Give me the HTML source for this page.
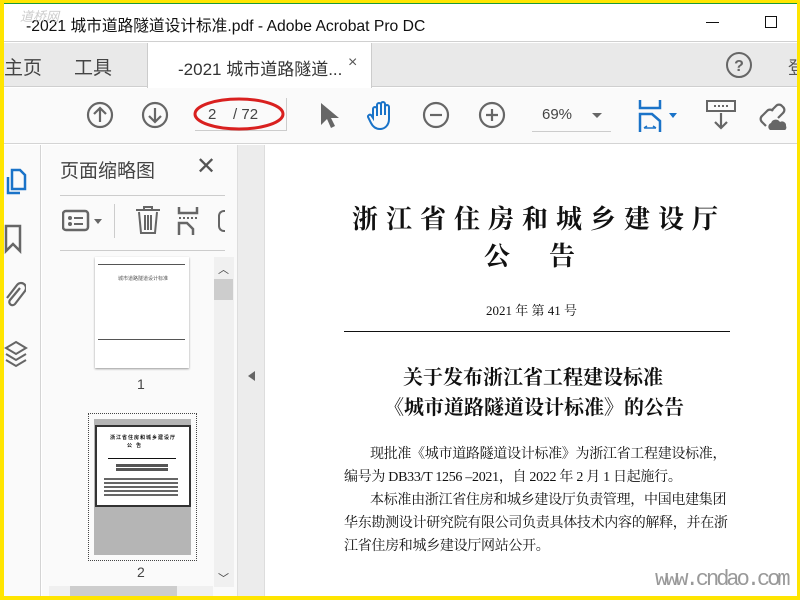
<!DOCTYPE html>
<html><head><meta charset="utf-8"><style>
*{margin:0;padding:0;box-sizing:border-box}
body{width:800px;height:600px;overflow:hidden;background:#fff;position:relative;font-family:"Liberation Sans","Noto Sans CJK SC",sans-serif;color:#333}
.a{position:absolute}
.serif{font-family:"Liberation Serif","Noto Serif CJK SC",serif;color:#111;white-space:nowrap}
.b{font-size:14px;line-height:23px;letter-spacing:-0.3px}
svg{position:absolute}
</style></head><body>
<div class="a" style="left:0;top:3px;width:800px;height:1px;background:#1a9a3a"></div>
<div class="a" style="left:4px;top:4px;width:793px;height:38px;background:#fff;border-bottom:1px solid #d0d0d0"></div>
<div class="a" style="left:26px;top:13px;font-size:15.7px;color:#111;white-space:nowrap">-2021 城市道路隧道设计标准.pdf - Adobe Acrobat Pro DC</div>
<div class="a" style="left:20px;top:6px;font-size:13px;color:#ccc;font-style:italic">道桥网</div>
<div class="a" style="left:706px;top:22px;width:13px;height:1px;background:#111"></div>
<div class="a" style="left:765px;top:16px;width:12px;height:12px;border:1px solid #111"></div>
<div class="a" style="left:4px;top:43px;width:793px;height:44px;background:#e9e9e9;border-bottom:1px solid #cfcfcf"></div>
<div class="a" style="left:147px;top:43px;width:225px;height:45px;background:#fff;border-left:1px solid #ccc;border-right:1px solid #ccc"></div>
<div class="a" style="left:4px;top:53px;font-size:19px;color:#444">主页</div>
<div class="a" style="left:74px;top:53px;font-size:19px;color:#444">工具</div>
<div class="a" style="left:178px;top:55px;font-size:17px;color:#333;white-space:nowrap">-2021 城市道路隧道...</div>
<div class="a" style="left:348px;top:54px;font-size:16px;color:#555">×</div>
<svg style="left:725px;top:51px" width="28" height="28"><circle cx="14" cy="14" r="12" fill="none" stroke="#666" stroke-width="2"/><text x="14" y="20" font-size="16" text-anchor="middle" fill="#666" font-family="Liberation Sans" font-weight="bold">?</text></svg>
<div class="a" style="left:788px;top:54px;font-size:18px;color:#555">登</div>
<div class="a" style="left:4px;top:88px;width:793px;height:56px;background:#fafafa;border-bottom:1px solid #d4d4d4"></div>
<svg style="left:86px;top:101px" width="28" height="28"><circle cx="14" cy="14" r="12" fill="none" stroke="#666" stroke-width="2.2"/><path d="M14 21V7M8 13l6-6 6 6" fill="none" stroke="#666" stroke-width="2.2"/></svg>
<svg style="left:141px;top:101px" width="28" height="28"><circle cx="14" cy="14" r="12" fill="none" stroke="#666" stroke-width="2.2"/><path d="M14 7v14M8 15l6 6 6-6" fill="none" stroke="#666" stroke-width="2.2"/></svg>
<div class="a" style="left:195px;top:130px;width:92px;height:1px;background:#ccc"></div>
<div class="a" style="left:208px;top:106px;font-size:15px;color:#444;white-space:nowrap">2&nbsp;&nbsp;&nbsp;&nbsp;/ 72</div>
<svg style="left:190px;top:94px" width="100" height="40"><ellipse cx="49" cy="20" rx="44" ry="15" fill="none" stroke="#d9201f" stroke-width="3"/></svg>
<div class="a" style="left:286px;top:98px;width:1px;height:32px;background:#ccc"></div>
<svg style="left:318px;top:101px" width="22" height="28"><path d="M3 2v22l6-6 4 9 4-2-4-8h8z" fill="#666"/></svg>
<svg style="left:366px;top:100px" width="30" height="32"><path d="M7 18V9a2 2 0 0 1 4 0v7V5a2 2 0 0 1 4 0v10V4a2 2 0 0 1 4 0v11V7a2 2 0 0 1 4 0v12c0 6-4 10-9 10-4 0-7-2-9-6l-3-6a2 2 0 0 1 3-2z" fill="none" stroke="#1a73c8" stroke-width="2"/></svg>
<svg style="left:422px;top:101px" width="28" height="28"><circle cx="14" cy="14" r="12" fill="none" stroke="#666" stroke-width="2.2"/><path d="M8 14h12" stroke="#666" stroke-width="2.2"/></svg>
<svg style="left:478px;top:101px" width="28" height="28"><circle cx="14" cy="14" r="12" fill="none" stroke="#666" stroke-width="2.2"/><path d="M8 14h12M14 8v12" stroke="#666" stroke-width="2.2"/></svg>
<div class="a" style="left:542px;top:106px;font-size:15px;color:#444">69%</div>
<div class="a" style="left:592px;top:113px;border:5px solid transparent;border-top:5px solid #666;border-bottom:0"></div>
<div class="a" style="left:532px;top:131px;width:79px;height:1px;background:#ccc"></div>
<svg style="left:638px;top:100px" width="42" height="32"><path d="M2 0v8h20V0" fill="none" stroke="#1a73c8" stroke-width="2.5"/><path d="M2 32V14h12l8 7v11" fill="none" stroke="#1a73c8" stroke-width="2.5"/><path d="M6 28h12M6 28l3-2M18 28l-3-2" stroke="#1a73c8" stroke-width="1.5"/><path d="M31 13h8l-4 5z" fill="#1a73c8"/></svg>
<svg style="left:706px;top:100px" width="30" height="32"><rect x="1" y="1" width="28" height="10" fill="none" stroke="#666" stroke-width="2"/><path d="M8 6h14" stroke="#666" stroke-width="2" stroke-dasharray="2 2"/><path d="M15 13v15M9 22l6 6 6-6" fill="none" stroke="#666" stroke-width="2.2"/></svg>
<svg style="left:756px;top:100px" width="32" height="32"><path d="M10 26l-4-4a4 4 0 0 1 0-6l5-5a4 4 0 0 1 6 0M16 10l4-4a4 4 0 0 1 6 0l1 1a4 4 0 0 1 0 6l-5 5" fill="none" stroke="#666" stroke-width="2.2"/><path d="M14 30a4 4 0 0 1 1-7 5 5 0 0 1 9-1 4 4 0 0 1 6 4 3 3 0 0 1-1 4z" fill="#666"/></svg>
<div class="a" style="left:4px;top:145px;width:37px;height:451px;background:#fafafa;border-right:1px solid #d4d4d4"></div>
<svg style="left:5px;top:168px" width="22" height="28"><path d="M7 2h8l5 5v14H7z" fill="none" stroke="#1a73c8" stroke-width="2.5"/><path d="M3 9v16h12" fill="none" stroke="#1a73c8" stroke-width="2.5"/></svg>
<svg style="left:4px;top:224px" width="20" height="30"><path d="M2 2h14v25l-7-7-7 7z" fill="none" stroke="#666" stroke-width="2.5"/></svg>
<svg style="left:4px;top:280px" width="22" height="30"><path d="M16 8L6 20a3 3 0 0 0 5 4l10-13a5 5 0 0 0-8-6L3 18" fill="none" stroke="#666" stroke-width="2.2"/></svg>
<svg style="left:4px;top:340px" width="24" height="32"><path d="M12 2l10 6-10 6-10-6zM2 14l10 6 10-6M2 20l10 6 10-6" fill="none" stroke="#666" stroke-width="2"/></svg>
<div class="a" style="left:42px;top:145px;width:195px;height:451px;background:#fafafa"></div>
<div class="a" style="left:60px;top:156px;font-size:19px;color:#444">页面缩略图</div>
<div class="a" style="left:196px;top:152px;font-size:24px;color:#555">✕</div>
<div class="a" style="left:60px;top:195px;width:165px;height:1px;background:#ccc"></div>
<div class="a" style="left:60px;top:250px;width:165px;height:1px;background:#ccc"></div>
<svg style="left:62px;top:208px" width="44" height="26"><rect x="1" y="3" width="25" height="19" rx="3" fill="none" stroke="#666" stroke-width="2.5"/><circle cx="8" cy="10" r="2" fill="#666"/><circle cx="8" cy="16" r="2" fill="#666"/><path d="M12 10h9M12 16h9" stroke="#666" stroke-width="2"/><path d="M32 11h8l-4 5z" fill="#666"/></svg>
<div class="a" style="left:114px;top:204px;width:1px;height:34px;background:#ccc"></div>
<svg style="left:135px;top:205px" width="26" height="30"><path d="M1 5h24M9 5V2h8v3M4 7l2 21h14l2-21M10 10v15M13 10v15M16 10v15" fill="none" stroke="#666" stroke-width="2"/></svg>
<svg style="left:177px;top:207px" width="24" height="28"><path d="M2 0v6h18V0M2 28V16h8l6 6v6" fill="none" stroke="#666" stroke-width="2.5"/><path d="M2 11h20" stroke="#666" stroke-width="2" stroke-dasharray="2 2"/></svg>
<div class="a" style="left:218px;top:210px;width:7px;height:22px;border:2.5px solid #666;border-right:0;border-radius:6px 0 0 6px"></div>
<div class="a" style="left:95px;top:257px;width:94px;height:111px;background:#fff;box-shadow:0 1px 2px #999"></div>
<div class="a" style="left:98px;top:264px;width:87px;height:1px;background:#555"></div>
<div class="a" style="left:118px;top:275px;font-size:5px;color:#555">城市道路隧道设计标准</div>
<div class="a" style="left:98px;top:339px;width:87px;height:1px;background:#555"></div>
<div class="a" style="left:137px;top:376px;font-size:14px;color:#444">1</div>
<div class="a" style="left:88px;top:413px;width:109px;height:148px;border:1px dotted #444"></div>
<div class="a" style="left:94px;top:419px;width:97px;height:136px;background:#b5b5b5"></div>
<div class="a" style="left:95px;top:425px;width:96px;height:82px;background:#fff;border:2px solid #333"></div>
<div class="a" style="left:110px;top:434px;font-size:5px;font-weight:bold;color:#111;letter-spacing:1px;white-space:nowrap">浙江省住房和城乡建设厅</div>
<div class="a" style="left:127px;top:442px;font-size:5px;font-weight:bold;color:#111;white-space:nowrap">公&nbsp;&nbsp;&nbsp;告</div>
<div class="a" style="left:108px;top:458px;width:68px;height:1px;background:#111"></div>
<div class="a" style="left:116px;top:463px;width:52px;height:9px;background:repeating-linear-gradient(#fff 0 1px,#555 1px 4px)"></div>
<div class="a" style="left:104px;top:476px;width:74px;height:20px;background:repeating-linear-gradient(#fff 0 2px,#666 2px 4px)"></div>
<div class="a" style="left:137px;top:564px;font-size:14px;color:#444">2</div>
<div class="a" style="left:214px;top:257px;width:20px;height:330px;background:#f0f0f0"></div>
<div class="a" style="left:214px;top:279px;width:19px;height:21px;background:#cdcdcd"></div>
<div class="a" style="left:218px;top:261px;font-size:11px;color:#444">︿</div>
<div class="a" style="left:218px;top:570px;font-size:11px;color:#444">﹀</div>
<div class="a" style="left:49px;top:586px;width:164px;height:10px;background:#f0f0f0"></div>
<div class="a" style="left:70px;top:586px;width:107px;height:10px;background:#cdcdcd"></div>
<div class="a" style="left:237px;top:145px;width:28px;height:451px;background:#ececec;border-left:1px solid #ddd;border-right:1px solid #ddd"></div>
<div class="a" style="left:248px;top:371px;border:5px solid transparent;border-right:7px solid #666;border-left:0"></div>
<div class="a serif" style="left:352px;top:199px;font-size:26px;font-weight:bold;letter-spacing:8px">浙江省住房和城乡建设厅</div>
<div class="a serif" style="left:484px;top:236px;font-size:26px;font-weight:bold">公&nbsp;&nbsp;&nbsp;&nbsp;&nbsp;&nbsp;告</div>
<div class="a serif" style="left:486px;top:300px;font-size:13px">2021 年 第 41 号</div>
<div class="a" style="left:344px;top:331px;width:386px;height:1px;background:#111"></div>
<div class="a serif" style="left:403px;top:361px;font-size:20px;font-weight:bold">关于发布浙江省工程建设标准</div>
<div class="a serif" style="left:384px;top:391px;font-size:20px;font-weight:bold">《城市道路隧道设计标准》的公告</div>
<div class="a serif b" style="left:370px;top:443px">现批准《城市道路隧道设计标准》为浙江省工程建设标准，</div>
<div class="a serif b" style="left:344px;top:466px">编号为 DB33/T 1256 –2021，自 2022 年 2 月 1 日起施行。</div>
<div class="a serif b" style="left:370px;top:489px">本标准由浙江省住房和城乡建设厅负责管理，中国电建集团</div>
<div class="a serif b" style="left:344px;top:512px">华东勘测设计研究院有限公司负责具体技术内容的解释，并在浙</div>
<div class="a serif b" style="left:344px;top:535px">江省住房和城乡建设厅网站公开。</div>
<div class="a" style="left:655px;top:567px;font-size:22px;color:#999;font-family:'Liberation Mono',monospace;letter-spacing:-3px;white-space:nowrap">www.cndao.com</div>
<div class="a" style="left:0;top:0;width:800px;height:3px;background:#ffe500"></div>
<div class="a" style="left:0;top:0;width:4px;height:600px;background:#ffe500"></div>
<div class="a" style="left:797px;top:0;width:3px;height:600px;background:#ffe500"></div>
<div class="a" style="left:0;top:596px;width:800px;height:4px;background:#ffe500"></div>
</body></html>
